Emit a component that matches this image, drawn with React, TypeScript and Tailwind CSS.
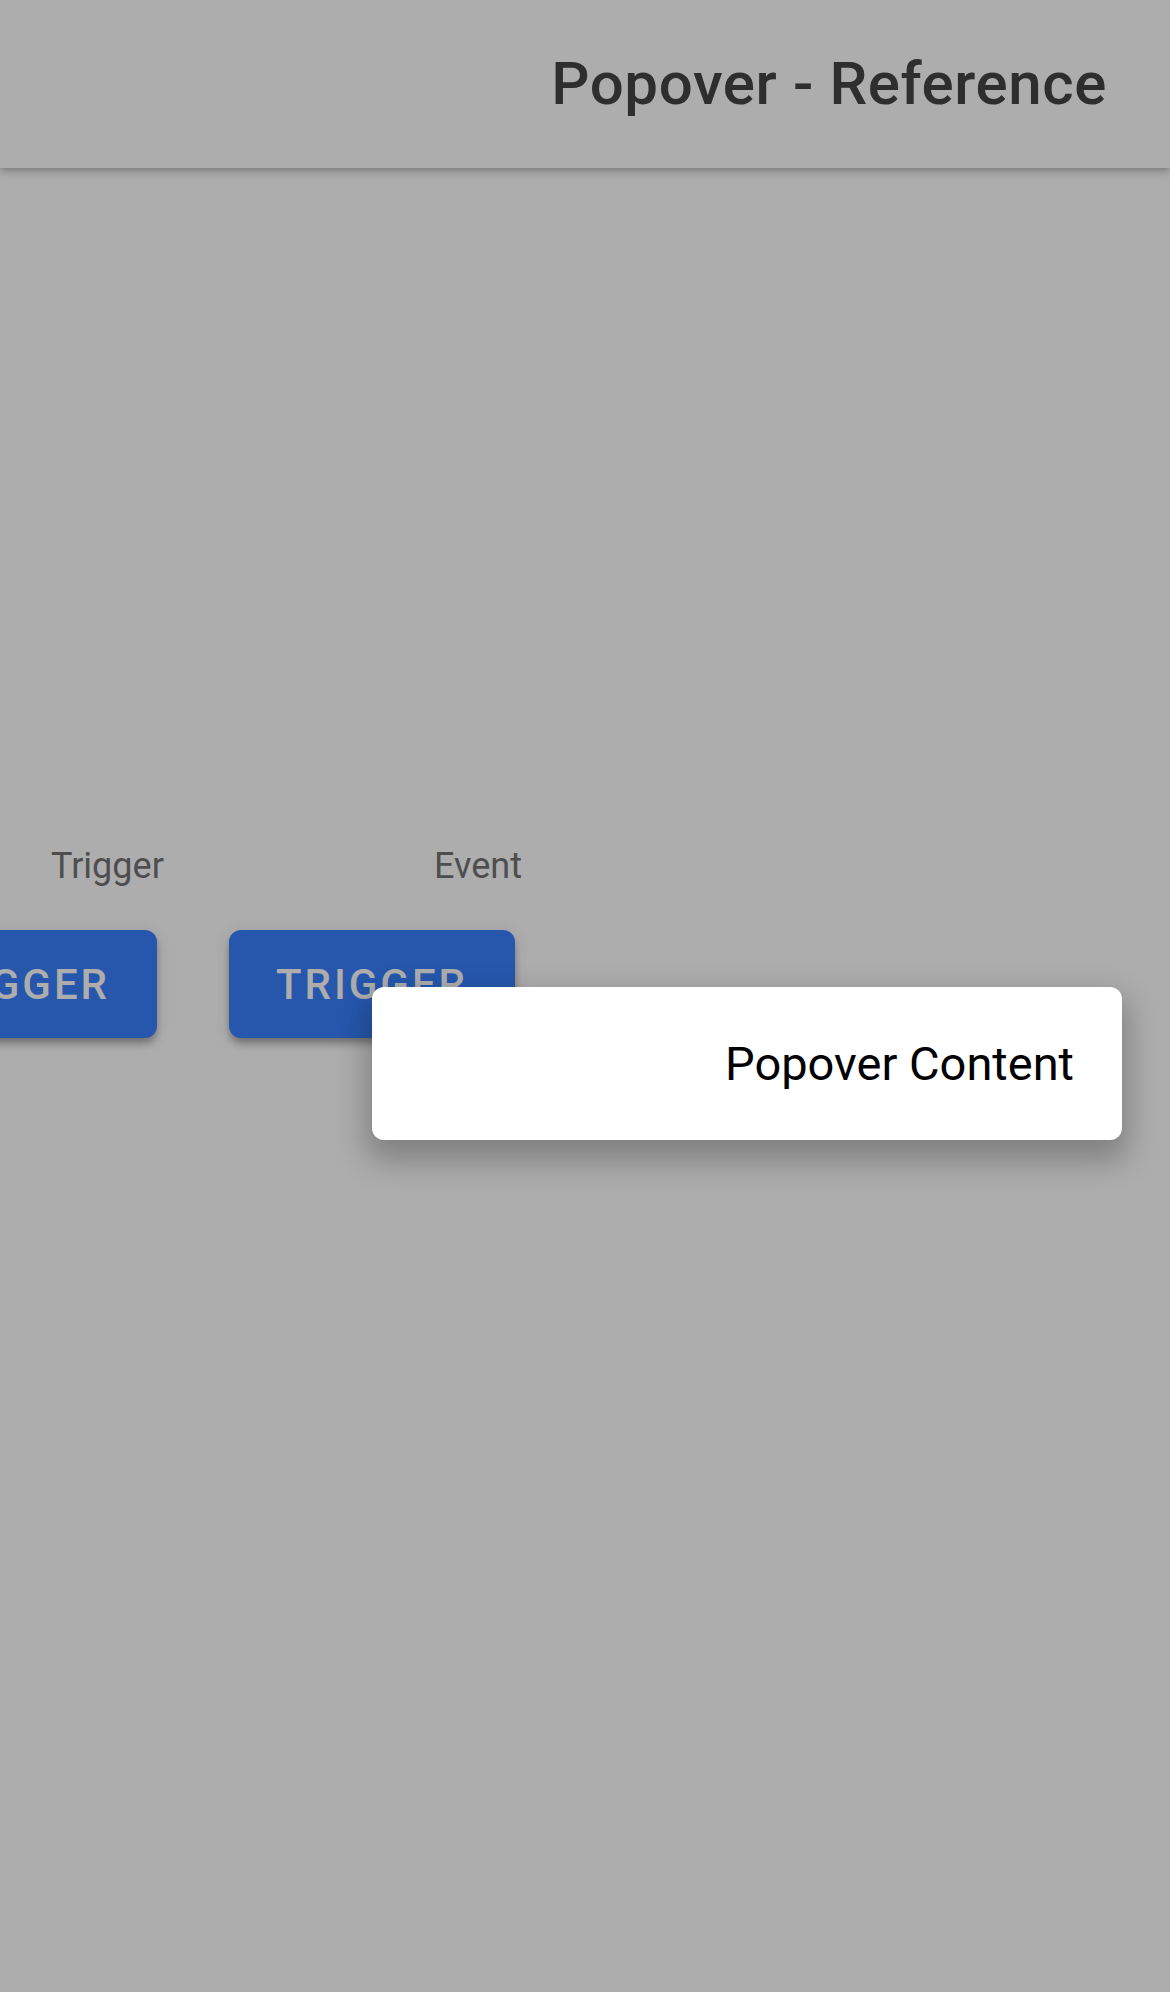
import React from "react";

const font = { fontFamily: "Roboto, 'Noto Sans', sans-serif" };

const TriggerButton = ({ className = "" }: { className?: string }) => (
  <button
    className={`w-[286px] h-[108px] shrink-0 rounded-[12px] bg-[#2657ad] text-[#adadad] text-[42px] font-medium tracking-[0.07em] uppercase shadow-[0_6px_9px_-3px_rgba(0,0,0,0.2),0_6px_6px_0_rgba(0,0,0,0.14),0_3px_15px_0_rgba(0,0,0,0.12)] ${className}`}
  >
    Trigger
  </button>
);

export default function App() {
  return (
    <div
      className="relative min-h-[1992px] w-[1170px] overflow-hidden bg-[#adadad]"
      style={font}
    >
      <header className="relative z-10 flex h-[168px] items-center justify-end bg-[#adadad] pr-[63px] shadow-[0_3px_6px_-1px_rgba(0,0,0,0.2),0_6px_8px_0_rgba(0,0,0,0.1)]">
        <h1 className="text-[60px] font-medium leading-none tracking-[0.6px] text-[#2e2e2e]">
          Popover - Reference
        </h1>
      </header>

      <div className="pt-[680px]">
        <div className="flex text-[36px] leading-none text-[#4e4e4e]">
          <span className="w-[434px] shrink-0 pl-[51px]">Trigger</span>
          <span>Event</span>
        </div>
        <div className="mt-[46px] ml-[-129px] flex gap-[72px]">
          <TriggerButton />
          <TriggerButton />
        </div>
      </div>

      <div className="absolute left-[372px] top-[987px] z-20 flex h-[153px] w-[750px] items-center justify-end rounded-[12px] bg-white pr-[48px] shadow-[0_15px_30px_6px_rgba(0,0,0,0.25)]">
        <span className="text-[47px] leading-none text-black">Popover Content</span>
      </div>
    </div>
  );
}
